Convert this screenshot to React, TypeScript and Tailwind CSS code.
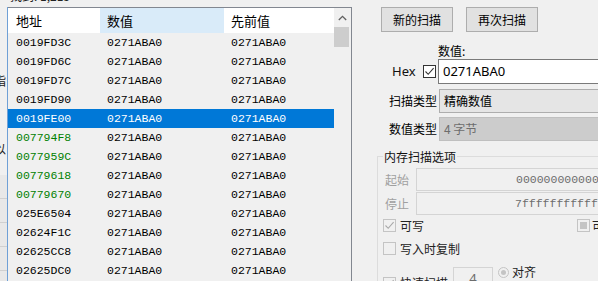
import React from "react";

const rows: { addr: string; kind: "n" | "sel" | "g" }[] = [
  { addr: "0019FD3C", kind: "n" },
  { addr: "0019FD6C", kind: "n" },
  { addr: "0019FD7C", kind: "n" },
  { addr: "0019FD90", kind: "n" },
  { addr: "0019FE00", kind: "sel" },
  { addr: "007794F8", kind: "g" },
  { addr: "0077959C", kind: "g" },
  { addr: "00779618", kind: "g" },
  { addr: "00779670", kind: "g" },
  { addr: "025E6504", kind: "n" },
  { addr: "02624F1C", kind: "n" },
  { addr: "02625CC8", kind: "n" },
  { addr: "02625DC0", kind: "n" },
];

function Check({ checked, disabled, partial }: { checked?: boolean; disabled?: boolean; partial?: boolean }) {
  return (
    <div
      className={`w-[13px] h-[13px] shrink-0 border flex items-center justify-center ${
        disabled ? "border-[#c4c4c4] bg-[#f0f0f0]" : "border-[#333333] bg-white"
      }`}
    >
      {checked && (
        <svg width="11" height="11" viewBox="0 0 11 11">
          <path d="M1.5 5.5 L4.2 8.3 L9.6 2.2" fill="none" stroke={disabled ? "#a8a8a8" : "#333333"} strokeWidth="1.1" />
        </svg>
      )}
      {partial && <div className="w-[7px] h-[7px] bg-[#c4c4c4]" />}
    </div>
  );
}

export default function App() {
  return (
    <div className="w-[598px] h-[281px] overflow-hidden bg-[#f0f0f0] flex text-[12px] text-black font-['Noto_Sans','Noto_Sans_CJK_SC',sans-serif]">
      {/* left: list popup over background window */}
      <div className="w-[352px] shrink-0 flex flex-col">
        <div className="h-[7px] overflow-hidden relative shrink-0">
          <div className="mt-[-11px] ml-[10px] leading-[14px] text-[12px] text-[#222] font-['Noto_Sans_CJK_SC',sans-serif] whitespace-nowrap">
            找到: 1,213
          </div>
        </div>
        <div className="flex flex-1 min-h-0">
          {/* sliver of background window */}
          <div className="w-[8px] shrink-0 flex flex-col border-r border-[#6fa0d6] overflow-hidden">
            <div className="h-[66px] shrink-0" />
            <div className="h-[16px] shrink-0 ml-[-6px] leading-[16px] text-[12px] text-[#222] font-['Noto_Sans_CJK_SC',sans-serif]">指</div>
            <div className="h-[52px] shrink-0" />
            <div className="h-[16px] shrink-0 ml-[-6px] leading-[16px] text-[12px] text-[#222] font-['Noto_Sans_CJK_SC',sans-serif]">以</div>
            <div className="h-[18px] shrink-0" />
            <div className="flex-1 bg-[#e8e8e8] flex flex-col">
              <div className="h-[24px] shrink-0 border-b border-[#d0d0d0]" />
              <div className="h-[24px] shrink-0 border-b border-[#d0d0d0]" />
              <div className="h-[24px] shrink-0 border-b border-[#d0d0d0]" />
              <div className="h-[24px] shrink-0 border-b border-[#d0d0d0]" />
            </div>
          </div>
          {/* list box */}
          <div className="flex-1 border-t border-r border-[#828790] flex min-w-0">
            <div className="flex-1 flex flex-col min-w-0">
              <div className="h-[25px] flex shrink-0 text-[13px] font-['Noto_Sans_CJK_SC',sans-serif] leading-[25px]">
                <div className="w-[92px] shrink-0 bg-white pl-[8px]">地址</div>
                <div className="w-[124px] shrink-0 bg-[#d9ebf9] pl-[7px]">数值</div>
                <div className="flex-1 bg-white pl-[7px]">先前值</div>
              </div>
              <div className="flex-1 flex flex-col font-['Liberation_Mono',monospace] text-[11.5px]">
                {rows.map((r) => (
                  <div
                    key={r.addr}
                    className={`h-[19px] shrink-0 flex items-center ${
                      r.kind === "sel" ? "bg-[#0078d7] text-white" : "text-black"
                    }`}
                  >
                    <div className={`w-[92px] shrink-0 pl-[8px] ${r.kind === "g" ? "text-[#008000]" : ""}`}>{r.addr}</div>
                    <div className="w-[124px] shrink-0 pl-[7px]">0271ABA0</div>
                    <div className="flex-1 pl-[7px]">0271ABA0</div>
                  </div>
                ))}
              </div>
            </div>
            {/* scrollbar */}
            <div className="w-[17px] shrink-0 flex flex-col bg-[#f0f0f0]">
              <div className="h-[19px] shrink-0 flex items-center justify-center">
                <svg width="9" height="6" viewBox="0 0 9 6">
                  <path d="M0.8 5 L4.5 1.3 L8.2 5" fill="none" stroke="#606060" strokeWidth="1.3" />
                </svg>
              </div>
              <div className="h-[20px] shrink-0 mr-[2px] bg-[#cdcdcd]" />
            </div>
          </div>
        </div>
      </div>

      {/* right panel */}
      <div className="flex-1 min-w-0 overflow-hidden flex flex-col font-['Noto_Sans','Noto_Sans_CJK_SC',sans-serif]">
        <div className="mt-[7px] ml-[29px] flex gap-[13px] shrink-0">
          <div className="w-[72px] h-[25px] shrink-0 bg-[#e1e1e1] border border-[#adadad] flex items-center justify-center font-['Noto_Sans_CJK_SC',sans-serif]">
            新的扫描
          </div>
          <div className="w-[72px] h-[25px] shrink-0 bg-[#e1e1e1] border border-[#adadad] flex items-center justify-center font-['Noto_Sans_CJK_SC',sans-serif]">
            再次扫描
          </div>
        </div>
        <div className="mt-[12px] ml-[86px] h-[14px] leading-[14px] shrink-0 font-['Noto_Sans_CJK_SC',sans-serif]">
          数值:
        </div>
        <div className="mt-[1px] h-[25px] flex items-center shrink-0">
          <div className="w-[71px] shrink-0 pl-[40px] text-[13px] text-[#111]">Hex</div>
          <Check checked />
          <div className="ml-[2px] w-[300px] h-[25px] bg-white border border-[#7a7a7a] flex items-center pl-[4px] text-[13px] shrink-0">
            0271ABA0
          </div>
        </div>
        <div className="mt-[5px] h-[24px] flex items-center shrink-0 font-['Noto_Sans_CJK_SC',sans-serif]">
          <div className="w-[85px] shrink-0 text-right whitespace-nowrap">扫描类型</div>
          <div className="ml-[2px] w-[300px] h-[24px] bg-[#e5e5e5] border border-[#adadad] flex items-center pl-[4px] shrink-0">
            精确数值
          </div>
        </div>
        <div className="mt-[4px] h-[24px] flex items-center shrink-0 font-['Noto_Sans_CJK_SC',sans-serif]">
          <div className="w-[85px] shrink-0 text-right whitespace-nowrap">数值类型</div>
          <div className="ml-[2px] w-[300px] h-[24px] bg-[#cccccc] border border-[#bfbfbf] flex items-center pl-[4px] text-[#6d6d6d] shrink-0">
            4 字节
          </div>
        </div>
        {/* group box */}
        <div className="mt-[15px] ml-[25px] w-[300px] border-l border-t border-[#dcdcdc] flex flex-col shrink-0 font-['Noto_Sans_CJK_SC',sans-serif]">
          <div className="mt-[-7px] ml-[5px] h-[13px] leading-[13px] px-[1px] bg-[#f0f0f0] self-start text-[#111]">
            内存扫描选项
          </div>
          <div className="mt-[5px] h-[23px] flex items-center">
            <div className="w-[38px] shrink-0 pl-[7px] text-[#a0a0a0]">起始</div>
            <div className="flex-1 h-[23px] border border-[#d4d4d4] bg-[#f0f0f0] flex items-center pl-[99px] font-['Liberation_Mono',monospace] text-[11.5px] text-[#6d6d6d] whitespace-nowrap overflow-hidden">
              000000000000000
            </div>
          </div>
          <div className="mt-[1px] h-[23px] flex items-center">
            <div className="w-[38px] shrink-0 pl-[7px] text-[#a0a0a0]">停止</div>
            <div className="flex-1 h-[23px] border border-[#d4d4d4] bg-[#f0f0f0] flex items-center pl-[98px] font-['Liberation_Mono',monospace] text-[11.5px] text-[#6d6d6d] whitespace-nowrap overflow-hidden">
              7fffffffffffffff
            </div>
          </div>
          <div className="mt-[4px] h-[13px] flex items-center">
            <div className="w-[199px] shrink-0 flex items-center pl-[5px]">
              <Check checked disabled />
              <span className="ml-[4px] text-[#222]">可写</span>
            </div>
            <Check partial disabled />
            <span className="ml-[2px] text-[#222] whitespace-nowrap">可执行</span>
          </div>
          <div className="mt-[10px] h-[13px] flex items-center pl-[5px]">
            <Check disabled />
            <span className="ml-[4px] text-[#222]">写入时复制</span>
          </div>
          <div className="mt-[8px] h-[30px] flex items-start pl-[5px]">
            <div className="mt-[11px] flex items-center shrink-0">
              <Check checked disabled />
              <span className="ml-[4px] text-[#222] whitespace-nowrap">快速扫描</span>
            </div>
            <div className="ml-[5px] mt-[4px] w-[40px] h-[24px] shrink-0 border border-[#d4d4d4] bg-[#f0f0f0] flex items-center justify-center text-[#6d6d6d] font-['Noto_Sans',sans-serif] text-[13px]">
              4
            </div>
            <div className="ml-[5px] flex items-center shrink-0">
              <div className="w-[11px] h-[11px] rounded-full border border-[#c4c4c4] flex items-center justify-center">
                <div className="w-[5px] h-[5px] rounded-full bg-[#c4c4c4]" />
              </div>
              <span className="ml-[3px] text-[#222] whitespace-nowrap">对齐</span>
            </div>
          </div>
        </div>
      </div>
    </div>
  );
}
